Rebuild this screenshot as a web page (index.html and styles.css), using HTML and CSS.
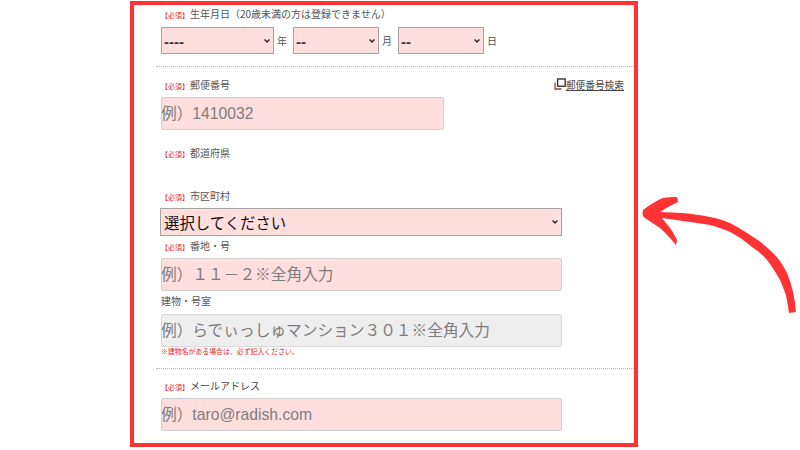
FILE: index.html
```html
<!DOCTYPE html>
<html lang="ja">
<head>
<meta charset="utf-8">
<title>登録フォーム</title>
<link rel="stylesheet" href="styles.css">
</head>
<body>
<main class="frame">
  <section class="section first">
    <div class="label"><span class="req">【必須】</span>生年月日（20歳未満の方は登録できません）</div>
    <div class="date-row">
      <select class="sel year"><option>----</option></select><span class="unit">年</span>
      <select class="sel day"><option>--</option></select><span class="unit">月</span>
      <select class="sel day"><option>--</option></select><span class="unit">日</span>
    </div>
  </section>
  <section class="section address">
    <div class="label label-row">
      <span><span class="req">【必須】</span>郵便番号</span>
      <a class="zip-link" href="#">
        <svg class="zip-icon" width="12" height="12" viewBox="0 0 12 12" aria-hidden="true">
          <path d="M1 4.5V11H7.5" fill="none" stroke="#8a4a3c" stroke-width="1.3"/>
          <rect x="3.6" y="1" width="7.6" height="7.2" fill="none" stroke="#3c3230" stroke-width="1.4"/>
        </svg><span class="zip-text">郵便番号検索</span>
      </a>
    </div>
    <input class="input zip" placeholder="例）1410032">
    <div class="label pref"><span class="req">【必須】</span>都道府県</div>
    <div class="label city"><span class="req">【必須】</span>市区町村</div>
    <select class="sel city-select"><option>選択してください</option></select>
    <div class="label tight"><span class="req">【必須】</span>番地・号</div>
    <input class="input wide" placeholder="例）１１－２※全角入力">
    <div class="label tight">建物・号室</div>
    <input class="input wide optional" placeholder="例）らでぃっしゅマンション３０１※全角入力">
    <p class="note">※建物名がある場合は、必ず記入ください。</p>
  </section>
  <section class="section last">
    <div class="label dark"><span class="req">【必須】</span>メールアドレス</div>
    <input class="input wide" placeholder="例）taro@radish.com">
  </section>
</main>
<svg class="arrow" width="800" height="450" viewBox="0 0 800 450" aria-hidden="true">
  <path fill="#ff3333" d="M796 312C795 298 792 285 787 273C783 265 779 259 773 253C767 247 760 241 753 237C746 232 738 227 730 223C723 220 716 218 710 217C702 215 692 214 683 213L660 212L668 207L678 202L677 197C672 197 667 197 663 198C657 200 652 204 647 207L643 210C642 214 643 217 645 218L660 228C666 233 671 239 676 245L677 240C675 236 673 232 670 228L662 218L690 222C697 223 704 224 710 225C717 227 724 229 730 232C738 236 745 241 752 247C758 251 763 255 767 260C772 266 776 273 780 280C783 287 786 294 787 300L789 313Z"/>
</svg>
</body>
</html>
```

FILE: styles.css
```css
* { box-sizing: border-box; }
html, body { margin: 0; padding: 0; background: #fff; overflow: hidden; }
body { width: 800px; height: 450px; font-family: "Noto Sans CJK JP", sans-serif; color: #555; }

.frame {
  width: 508px;
  height: 446px;
  margin: 1px 0 0 130px;
  padding-left: 22px;
  border: 4px solid #ff3333;
  background: #fff;
  overflow: hidden;
}

.section { padding-left: 5px; }
.first { padding-top: 2px; padding-bottom: 12px; border-bottom: 1px dotted #b5b5b5; }
.address { padding-top: 11px; padding-right: 10px; padding-bottom: 12px; border-bottom: 1px dotted #b5b5b5; }
.last { padding-top: 10px; }

.label { height: 14px; font-size: 10px; line-height: 14px; white-space: nowrap; }
.dark { color: #444; }
.req { display: inline-block; width: 29px; font-size: 7px; color: #ea2a2a; }
.label-row { display: flex; justify-content: space-between; align-items: center; }
.pref { margin-top: 16px; }
.city { margin-top: 29px; }
.tight { margin-top: 3px; }

.date-row { display: flex; align-items: center; gap: 3px; margin-top: 6px; }
.unit { width: 13px; font-size: 10px; }

.sel {
  appearance: none;
  height: 27px;
  padding: 2px 0 0 2px;
  background-color: #ffdede;
  background-image: url("data:image/svg+xml,%3Csvg xmlns='http://www.w3.org/2000/svg' width='6' height='4'%3E%3Cpath d='M.6.6 3 3 5.4.6' fill='none' stroke='%23222' stroke-width='1.4'/%3E%3C/svg%3E");
  background-repeat: no-repeat;
  background-position: right 3px center;
  border: 1px solid #a8a2a2;
  border-radius: 0;
  color: #333;
  font-family: "Liberation Sans", "Noto Sans CJK JP", sans-serif;
  font-size: 15px;
  font-weight: 700;
}
.year { width: 113px; }
.day { width: 86px; }
.city-select {
  display: block;
  width: 402px;
  height: 28px;
  margin: 5px 0 0 -1px;
  padding: 0 0 0 3px;
  font-family: "Noto Sans CJK JP", sans-serif;
  font-size: 15.4px;
  font-weight: 400;
  color: #111;
}

.input {
  display: block;
  height: 33px;
  margin-top: 5px;
  padding: 0;
  background: #ffdede;
  border: 1px solid #d5d0d0;
  border-radius: 2px;
  font-family: "Liberation Sans", "Noto Sans CJK JP", sans-serif;
  font-size: 15.7px;
  text-indent: -1px;
  outline: none;
}
.input::placeholder { color: #7d7d7d; opacity: 1; }
.zip { width: 283px; }
.wide { width: 401px; }
.optional { margin-top: 6px; background: #eeeeee; border-color: #d8d8d8; }

.note { margin: 0; height: 9px; font-size: 6.9px; line-height: 9px; color: #ee2222; }

.zip-link { display: flex; align-items: center; color: #444; font-size: 9.7px; text-decoration: none; }
.zip-icon { display: block; margin-bottom: 3px; }
.zip-text { text-decoration: underline; }

.arrow { position: absolute; left: 0; top: 0; pointer-events: none; }
```
